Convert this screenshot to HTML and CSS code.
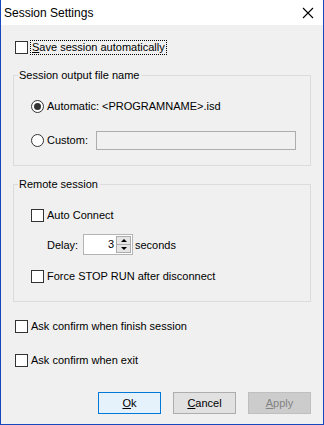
FILE: index.html
```html
<!DOCTYPE html>
<html>
   <head>
      <meta http-equiv="Content-Type" content="text/html;charset=utf-8" />
      <link rel="stylesheet" href="styles.css">
   </head>
   <body>
      <div class="janela">
         <div class="titulo">
            <span>Session Settings</span>
            <svg class="fechar" width="12" height="12" viewBox="0 0 12 12">
               <path d="M1 1 L11 11 M11 1 L1 11" stroke="#000" stroke-width="1.1" fill="none" />
            </svg>
         </div>
         <div class="conteudo">
            <div class="linha linha-topo">
               <span class="caixa"></span>
               <span class="foco"><u>S</u>ave session automatically</span>
            </div>

            <fieldset class="grupo grupo-arquivo">
               <legend>Session output file name</legend>
               <div class="linha">
                  <span class="radio marcado"></span>
                  <span>Automatic: &lt;PROGRAMNAME&gt;.isd</span>
               </div>
               <div class="linha linha-espaco">
                  <span class="radio"></span>
                  <span class="rotulo-custom">Custom:</span>
                  <span class="campo"></span>
               </div>
            </fieldset>

            <fieldset class="grupo grupo-remoto">
               <legend>Remote session</legend>
               <div class="linha">
                  <span class="caixa"></span>
                  <span>Auto Connect</span>
               </div>
               <div class="linha linha-delay">
                  <span class="rotulo-delay">Delay:</span>
                  <span class="spin">
                     <span class="spin-valor">3</span>
                     <span class="spin-botoes">
                        <span class="spin-botao"><span class="seta-cima"></span></span>
                        <span class="spin-botao"><span class="seta-baixo"></span></span>
                     </span>
                  </span>
                  <span class="segundos">seconds</span>
               </div>
               <div class="linha linha-force">
                  <span class="caixa"></span>
                  <span>Force STOP RUN after disconnect</span>
               </div>
            </fieldset>

            <div class="linha linha-ask">
               <span class="caixa"></span>
               <span>Ask confirm when finish session</span>
            </div>
            <div class="linha linha-espaco">
               <span class="caixa"></span>
               <span>Ask confirm when exit</span>
            </div>

            <div class="botoes">
               <button class="botao padrao"><u>O</u>k</button>
               <button class="botao"><u>C</u>ancel</button>
               <button class="botao desativado" disabled><u>A</u>pply</button>
            </div>
         </div>
      </div>
   </body>
</html>
```

FILE: styles.css
```css
body {
   margin: 0;
   font-family: "Liberation Sans", Arial, sans-serif;
   font-size: 11px;
   color: #000;
}

.janela {
   width: 322px;
   height: 424px;
   border: 1px solid #1848be;
   border-top: none;
   background: #f0f0f0;
   display: flex;
   flex-direction: column;
}

.titulo {
   height: 25px;
   background: #fff;
   display: flex;
   align-items: center;
   justify-content: space-between;
   padding: 0 9px 0 3px;
   font-size: 12px;
}

.fechar {
   display: block;
}

.conteudo {
   padding: 12px 12px 0 12px;
}

.linha {
   height: 20px;
   display: flex;
   align-items: center;
}

.linha-topo {
   padding-left: 2px;
}

.linha-espaco {
   margin-top: 14px;
}

.caixa {
   width: 11px;
   height: 11px;
   border: 1px solid #333;
   background: #fff;
   margin-right: 3px;
   flex: none;
}

.foco {
   outline: 1px dotted #000;
   padding: 0 1px;
   line-height: 13px;
}

.radio {
   width: 11px;
   height: 11px;
   border: 1px solid #333;
   border-radius: 50%;
   background: #fff;
   margin-right: 3px;
   flex: none;
   display: flex;
   align-items: center;
   justify-content: center;
}

.radio.marcado::after {
   content: "";
   width: 7px;
   height: 7px;
   border-radius: 50%;
   background: #333;
}

.grupo {
   margin: 11px 0 0 0;
   padding: 14px 12px 15px 17px;
   border: 1px solid #dcdcdc;
   min-width: 0;
}

.grupo legend {
   padding: 0 2px 0 1px;
   margin-left: -13px;
   line-height: 14px;
}

.rotulo-custom {
   width: 49px;
}

.campo {
   width: 198px;
   height: 17px;
   border: 1px solid #adadad;
   background: #f0f0f0;
}

.linha-delay {
   height: 21px;
   margin-top: 9px;
   padding-left: 16px;
}

.rotulo-delay {
   width: 36px;
}

.spin {
   width: 48px;
   height: 19px;
   border: 1px solid #b4b4b4;
   background: #fff;
   display: flex;
   align-items: stretch;
}

.spin-valor {
   flex: 1;
   text-align: right;
   line-height: 19px;
   padding-right: 2px;
}

.spin-botoes {
   width: 15px;
   display: flex;
   flex-direction: column;
   margin: 1px 1px 1px 0;
}

.spin-botao {
   flex: 1;
   background: #e5e5e5;
   border: 1px solid #acacac;
   display: flex;
   align-items: center;
   justify-content: center;
}

.spin-botao + .spin-botao {
   border-top: none;
}

.seta-cima {
   width: 0;
   height: 0;
   border-left: 3px solid transparent;
   border-right: 3px solid transparent;
   border-bottom: 3px solid #000;
}

.seta-baixo {
   width: 0;
   height: 0;
   border-left: 3px solid transparent;
   border-right: 3px solid transparent;
   border-top: 3px solid #000;
}

.segundos {
   margin-left: 2px;
}

.linha-force {
   margin-top: 11px;
}

.linha-ask {
   margin-top: 14px;
   padding-left: 2px;
}

.linha-ask + .linha {
   padding-left: 2px;
}

.botoes {
   margin-top: 22px;
   display: flex;
   justify-content: flex-end;
   gap: 12px;
}

.botao {
   width: 63px;
   height: 22px;
   font-family: "Liberation Sans", Arial, sans-serif;
   font-size: 11px;
   color: #000;
   background: #e1e1e1;
   border: 1px solid #adadad;
   padding: 0;
}

.botao.padrao {
   background: #e5f1fb;
   border-color: #0078d7;
}

.botao.desativado {
   background: #cccccc;
   border-color: #bfbfbf;
   color: #838383;
}
```
